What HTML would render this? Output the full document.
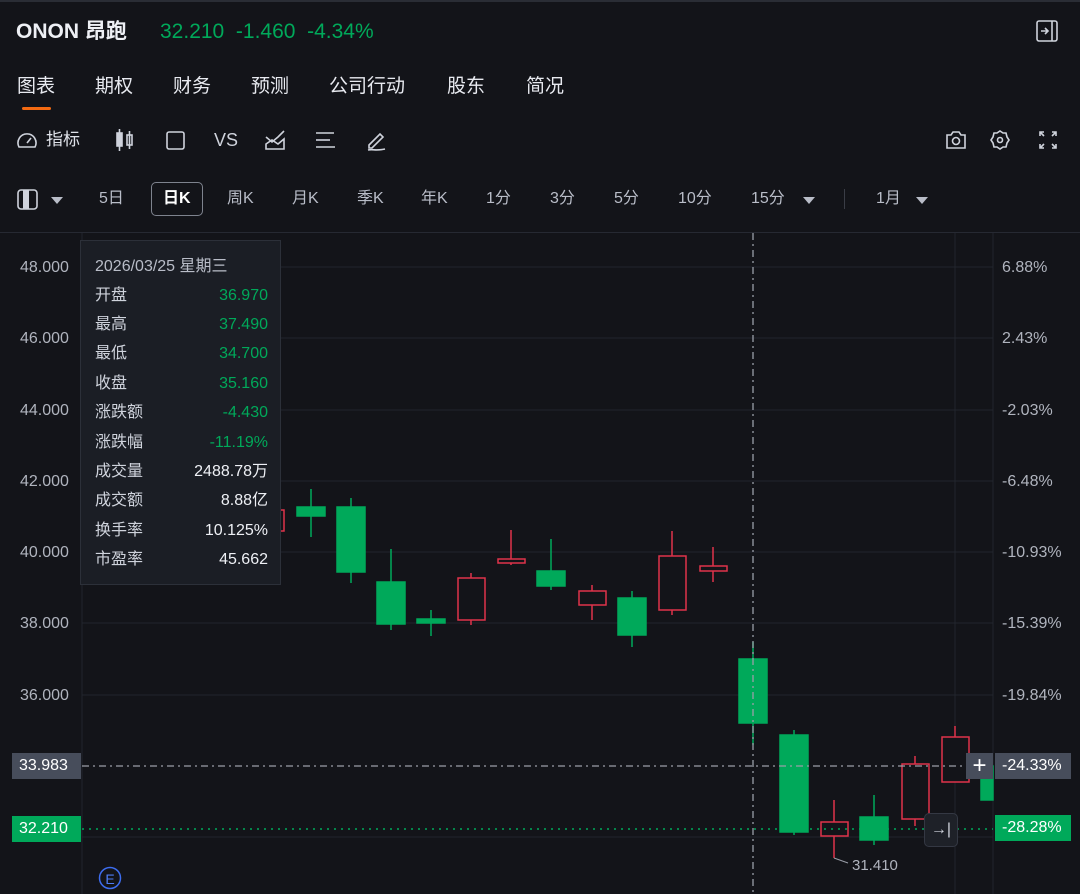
<!DOCTYPE html>
<html><head><meta charset="utf-8"><style>
*{margin:0;padding:0;box-sizing:border-box}
body{width:1080px;height:894px;background:#131419;color:#e6e8ee;font-family:"Liberation Sans","Noto Sans CJK SC",sans-serif;position:relative;overflow:hidden}
.a{position:absolute;white-space:nowrap;line-height:20px}
.g{color:#00a95a}
.t{font-size:19px;color:#e8eaf0;line-height:22px}
.tf{font-size:16px;color:#b9bdc8}
.ax{font-size:16px;color:#b0b4be}
.tt div{position:absolute;font-size:16px;color:#cfd3dc;line-height:20px}
</style></head><body>
<div class="a" style="left:0;top:0;width:1080px;height:2px;background:#2a2d35"></div>
<div class="a" style="left:16px;top:20px;font-size:21px;line-height:24px;font-weight:bold;color:#eef0f5">ONON 昂跑</div>
<div class="a g" style="left:160px;top:20px;font-size:21px;line-height:24px">32.210&nbsp; -1.460&nbsp; -4.34%</div>
<svg class="a" style="left:1036px;top:20px" width="22" height="22" viewBox="0 0 22 22" fill="none" stroke="#cfd3dc" stroke-width="1.6"><rect x="1" y="1" width="20" height="20" rx="2"/><line x1="16" y1="1" x2="16" y2="21"/><path d="M5 11h7M9 8l3 3-3 3"/></svg>

<div class="a t" style="left:17px;top:76px">图表</div>
<div class="a" style="left:22px;top:107px;width:29px;height:3px;background:#f36a12;border-radius:2px"></div>
<div class="a t" style="left:95px;top:76px">期权</div>
<div class="a t" style="left:173px;top:76px">财务</div>
<div class="a t" style="left:251px;top:76px">预测</div>
<div class="a t" style="left:329px;top:76px">公司行动</div>
<div class="a t" style="left:447px;top:76px">股东</div>
<div class="a t" style="left:526px;top:76px">简况</div>

<svg class="a" style="left:16px;top:130px" width="22" height="20" viewBox="0 0 22 20" fill="none" stroke="#cfd3dc" stroke-width="1.6"><path d="M3 17A9 9 0 1 1 19 17Z"/><path d="M11 13l4-5"/></svg>
<div class="a" style="left:46px;top:130px;font-size:17px;color:#dfe2e9">指标</div>
<svg class="a" style="left:112px;top:128px" width="26" height="24" viewBox="0 0 26 24" fill="none" stroke="#cfd3dc" stroke-width="1.6"><rect x="5" y="5" width="5" height="13" fill="#cfd3dc"/><line x1="7.5" y1="1" x2="7.5" y2="23"/><rect x="15" y="7" width="5" height="10"/><line x1="17.5" y1="3" x2="17.5" y2="21"/></svg>
<svg class="a" style="left:166px;top:131px" width="20" height="20"><rect x="1" y="1" width="17" height="17" rx="2" fill="none" stroke="#cfd3dc" stroke-width="1.6"/></svg>
<div class="a" style="left:214px;top:130px;font-size:18px;color:#cfd3dc">VS</div>
<svg class="a" style="left:264px;top:129px" width="24" height="22" viewBox="0 0 24 22" fill="none" stroke="#cfd3dc" stroke-width="1.6"><path d="M2 8l6 5 6-5 6-6M2 15l6-4 6 4 6-5v10H2z"/></svg>
<svg class="a" style="left:315px;top:131px" width="22" height="20" stroke="#cfd3dc" stroke-width="1.6"><line x1="1" y1="2" x2="19" y2="2"/><line x1="1" y1="9" x2="15" y2="9"/><line x1="1" y1="16" x2="20" y2="16"/></svg>
<svg class="a" style="left:365px;top:128px" width="24" height="24" viewBox="0 0 24 24" fill="none" stroke="#cfd3dc" stroke-width="1.6"><path d="M4 17l11-11 3 3-11 11H4z"/><path d="M3 22c5-1 8 1 17-1"/></svg>

<svg class="a" style="left:946px;top:130px" width="20" height="20" viewBox="0 0 20 20" fill="none" stroke="#cfd3dc" stroke-width="1.6"><path d="M1 5h4l2-3h6l2 3h4v13H1z"/><circle cx="10" cy="11" r="3.5"/></svg>
<svg class="a" style="left:990px;top:130px" width="20" height="20" viewBox="0 0 20 20" fill="none" stroke="#cfd3dc" stroke-width="1.6"><path d="M10 1l3 2h3l1 4 2 3-2 3-1 4h-3l-3 2-3-2H4l-1-4-2-3 2-3 1-4h3z"/><circle cx="10" cy="10" r="2.5"/></svg>
<svg class="a" style="left:1038px;top:130px" width="20" height="20" viewBox="0 0 20 20" fill="none" stroke="#cfd3dc" stroke-width="1.6"><path d="M2 6V2h4M2 2l4 4M14 2h4v4M18 2l-4 4M2 14v4h4M2 18l4-4M18 14v4h-4M18 18l-4-4"/></svg>

<svg class="a" style="left:17px;top:189px" width="22" height="22"><rect x="1" y="1" width="19" height="19" rx="3" fill="none" stroke="#cfd3dc" stroke-width="1.6"/><rect x="6" y="1" width="6" height="19" fill="#cfd3dc"/></svg>
<svg class="a" style="left:50px;top:196px" width="14" height="9"><path d="M1 1h12L7 8z" fill="#b9bdc8"/></svg>
<div class="a tf" style="left:99px;top:189px">5日</div>
<div class="a" style="left:151px;top:182px;width:52px;height:34px;border:1.5px solid #7e838e;border-radius:5px"></div>
<div class="a" style="left:163px;top:189px;font-size:16px;color:#fff;font-weight:bold">日K</div>
<div class="a tf" style="left:227px;top:189px">周K</div>
<div class="a tf" style="left:292px;top:189px">月K</div>
<div class="a tf" style="left:357px;top:189px">季K</div>
<div class="a tf" style="left:421px;top:189px">年K</div>
<div class="a tf" style="left:486px;top:189px">1分</div>
<div class="a tf" style="left:550px;top:189px">3分</div>
<div class="a tf" style="left:614px;top:189px">5分</div>
<div class="a tf" style="left:678px;top:189px">10分</div>
<div class="a tf" style="left:751px;top:189px">15分</div>
<svg class="a" style="left:802px;top:196px" width="14" height="9"><path d="M1 1h12L7 8z" fill="#b9bdc8"/></svg>
<div class="a" style="left:844px;top:189px;width:1px;height:20px;background:#3a3d46"></div>
<div class="a tf" style="left:876px;top:189px">1月</div>
<svg class="a" style="left:915px;top:196px" width="14" height="9"><path d="M1 1h12L7 8z" fill="#b9bdc8"/></svg>
<div class="a" style="left:0;top:232px;width:1080px;height:1px;background:#262932"></div>

<svg class="a" style="left:0;top:233px" width="1080" height="661" viewBox="0 233 1080 661">
<g stroke="#22252d" stroke-width="1">
<line x1="82" y1="267" x2="993" y2="267"/><line x1="82" y1="338" x2="993" y2="338"/><line x1="82" y1="410" x2="993" y2="410"/><line x1="82" y1="481" x2="993" y2="481"/><line x1="82" y1="552" x2="993" y2="552"/><line x1="82" y1="623" x2="993" y2="623"/><line x1="82" y1="695" x2="993" y2="695"/><line x1="82" y1="837" x2="993" y2="837"/>
<line x1="82" y1="233" x2="82" y2="894"/><line x1="993" y1="233" x2="993" y2="894"/><line x1="955" y1="233" x2="955" y2="894"/>
</g>
<g fill="none" stroke="#e0334a" stroke-width="1.5">
<rect x="258" y="510" width="26" height="21"/>
<line x1="471" y1="573" x2="471" y2="625"/><rect x="458" y="578" width="27" height="42" fill="#131419"/>
<line x1="511" y1="530" x2="511" y2="565"/><rect x="498" y="559" width="27" height="4" fill="#131419"/>
<line x1="592" y1="585" x2="592" y2="620"/><rect x="579" y="591" width="27" height="14" fill="#131419"/>
<line x1="672" y1="531" x2="672" y2="615"/><rect x="659" y="556" width="27" height="54" fill="#131419"/>
<line x1="713" y1="547" x2="713" y2="582"/><rect x="700" y="566" width="27" height="5" fill="#131419"/>
<line x1="834" y1="800" x2="834" y2="858"/><rect x="821" y="822" width="27" height="14" fill="#131419"/>
<line x1="915" y1="756" x2="915" y2="826"/><rect x="902" y="764" width="27" height="55" fill="#131419"/>
<line x1="955" y1="726" x2="955" y2="782"/><rect x="942" y="737" width="27" height="45" fill="#131419"/>
</g>
<g fill="#00a95a" stroke="#00a95a" stroke-width="1.5">
<line x1="311" y1="489" x2="311" y2="537"/><rect x="297" y="507" width="28" height="9"/>
<line x1="351" y1="498" x2="351" y2="583"/><rect x="337" y="507" width="28" height="65"/>
<line x1="391" y1="549" x2="391" y2="630"/><rect x="377" y="582" width="28" height="42"/>
<line x1="431" y1="610" x2="431" y2="636"/><rect x="417" y="619" width="28" height="4"/>
<line x1="551" y1="539" x2="551" y2="590"/><rect x="537" y="571" width="28" height="15"/>
<line x1="632" y1="591" x2="632" y2="647"/><rect x="618" y="598" width="28" height="37"/>
<line x1="753" y1="642" x2="753" y2="745"/><rect x="739" y="659" width="28" height="64"/>
<line x1="794" y1="730" x2="794" y2="835"/><rect x="780" y="735" width="28" height="97"/>
<line x1="874" y1="795" x2="874" y2="845"/><rect x="860" y="817" width="28" height="23"/>
<rect x="981" y="766" width="12" height="34"/>
</g>
<line x1="753" y1="233" x2="753" y2="894" stroke="#9a9ea8" stroke-width="1.3" stroke-dasharray="7,4,2,4"/>
<line x1="82" y1="766" x2="993" y2="766" stroke="#9a9ea8" stroke-width="1.3" stroke-dasharray="7,4,2,4"/>
<line x1="82" y1="829" x2="993" y2="829" stroke="#00a95a" stroke-width="1.5" stroke-dasharray="2,5"/>
<path d="M834 858l14 5" stroke="#9a9ea8" stroke-width="1"/>
<circle cx="110" cy="878" r="10.5" fill="none" stroke="#3d6df0" stroke-width="1.5"/>
<text x="110" y="884" fill="#4d7cf5" font-size="14" text-anchor="middle" font-family="Liberation Sans">E</text>
</svg>

<div class="a ax" style="left:20px;top:258px">48.000</div>
<div class="a ax" style="left:20px;top:329px">46.000</div>
<div class="a ax" style="left:20px;top:401px">44.000</div>
<div class="a ax" style="left:20px;top:472px">42.000</div>
<div class="a ax" style="left:20px;top:543px">40.000</div>
<div class="a ax" style="left:20px;top:614px">38.000</div>
<div class="a ax" style="left:20px;top:686px">36.000</div>
<div class="a" style="left:12px;top:753px;width:69px;height:26px;background:#474d5b;color:#fff;font-size:16px;padding:3px 0 0 7px">33.983</div>
<div class="a" style="left:12px;top:816px;width:69px;height:26px;background:#00a95a;color:#fff;font-size:16px;padding:3px 0 0 7px">32.210</div>

<div class="a ax" style="left:1002px;top:258px">6.88%</div>
<div class="a ax" style="left:1002px;top:329px">2.43%</div>
<div class="a ax" style="left:1002px;top:401px">-2.03%</div>
<div class="a ax" style="left:1002px;top:472px">-6.48%</div>
<div class="a ax" style="left:1002px;top:543px">-10.93%</div>
<div class="a ax" style="left:1002px;top:614px">-15.39%</div>
<div class="a ax" style="left:1002px;top:686px">-19.84%</div>
<div class="a" style="left:966px;top:753px;width:27px;height:26px;background:#474d5b;color:#fff;font-size:24px;text-align:center;line-height:25px">+</div>
<div class="a" style="left:995px;top:753px;width:76px;height:26px;background:#474d5b;color:#fff;font-size:16px;padding:3px 0 0 7px">-24.33%</div>
<div class="a" style="left:995px;top:815px;width:76px;height:26px;background:#00a95a;color:#fff;font-size:16px;padding:3px 0 0 7px">-28.28%</div>
<div class="a" style="left:924px;top:813px;width:34px;height:34px;background:#1e2128;border:1px solid #343843;border-radius:5px;color:#cfd3dc;font-size:16px;text-align:center;line-height:32px">→|</div>
<div class="a" style="left:852px;top:856px;font-size:15px;color:#b0b4be">31.410</div>

<div class="a tt" style="left:80px;top:240px;width:201px;height:345px;background:#1b1e25;border:1px solid #2c3039">
<div style="left:14px;top:16px;color:#b9bdc8">2026/03/25 星期三</div>
<div style="left:14px;top:45px">开盘</div><div style="right:12px;top:45px;color:#00a95a">36.970</div>
<div style="left:14px;top:74px">最高</div><div style="right:12px;top:74px;color:#00a95a">37.490</div>
<div style="left:14px;top:103px">最低</div><div style="right:12px;top:103px;color:#00a95a">34.700</div>
<div style="left:14px;top:133px">收盘</div><div style="right:12px;top:133px;color:#00a95a">35.160</div>
<div style="left:14px;top:162px">涨跌额</div><div style="right:12px;top:162px;color:#00a95a">-4.430</div>
<div style="left:14px;top:192px">涨跌幅</div><div style="right:12px;top:192px;color:#00a95a">-11.19%</div>
<div style="left:14px;top:221px">成交量</div><div style="right:12px;top:221px;color:#eef0f5">2488.78万</div>
<div style="left:14px;top:250px">成交额</div><div style="right:12px;top:250px;color:#eef0f5">8.88亿</div>
<div style="left:14px;top:280px">换手率</div><div style="right:12px;top:280px;color:#eef0f5">10.125%</div>
<div style="left:14px;top:309px">市盈率</div><div style="right:12px;top:309px;color:#eef0f5">45.662</div>
</div>
</body></html>
